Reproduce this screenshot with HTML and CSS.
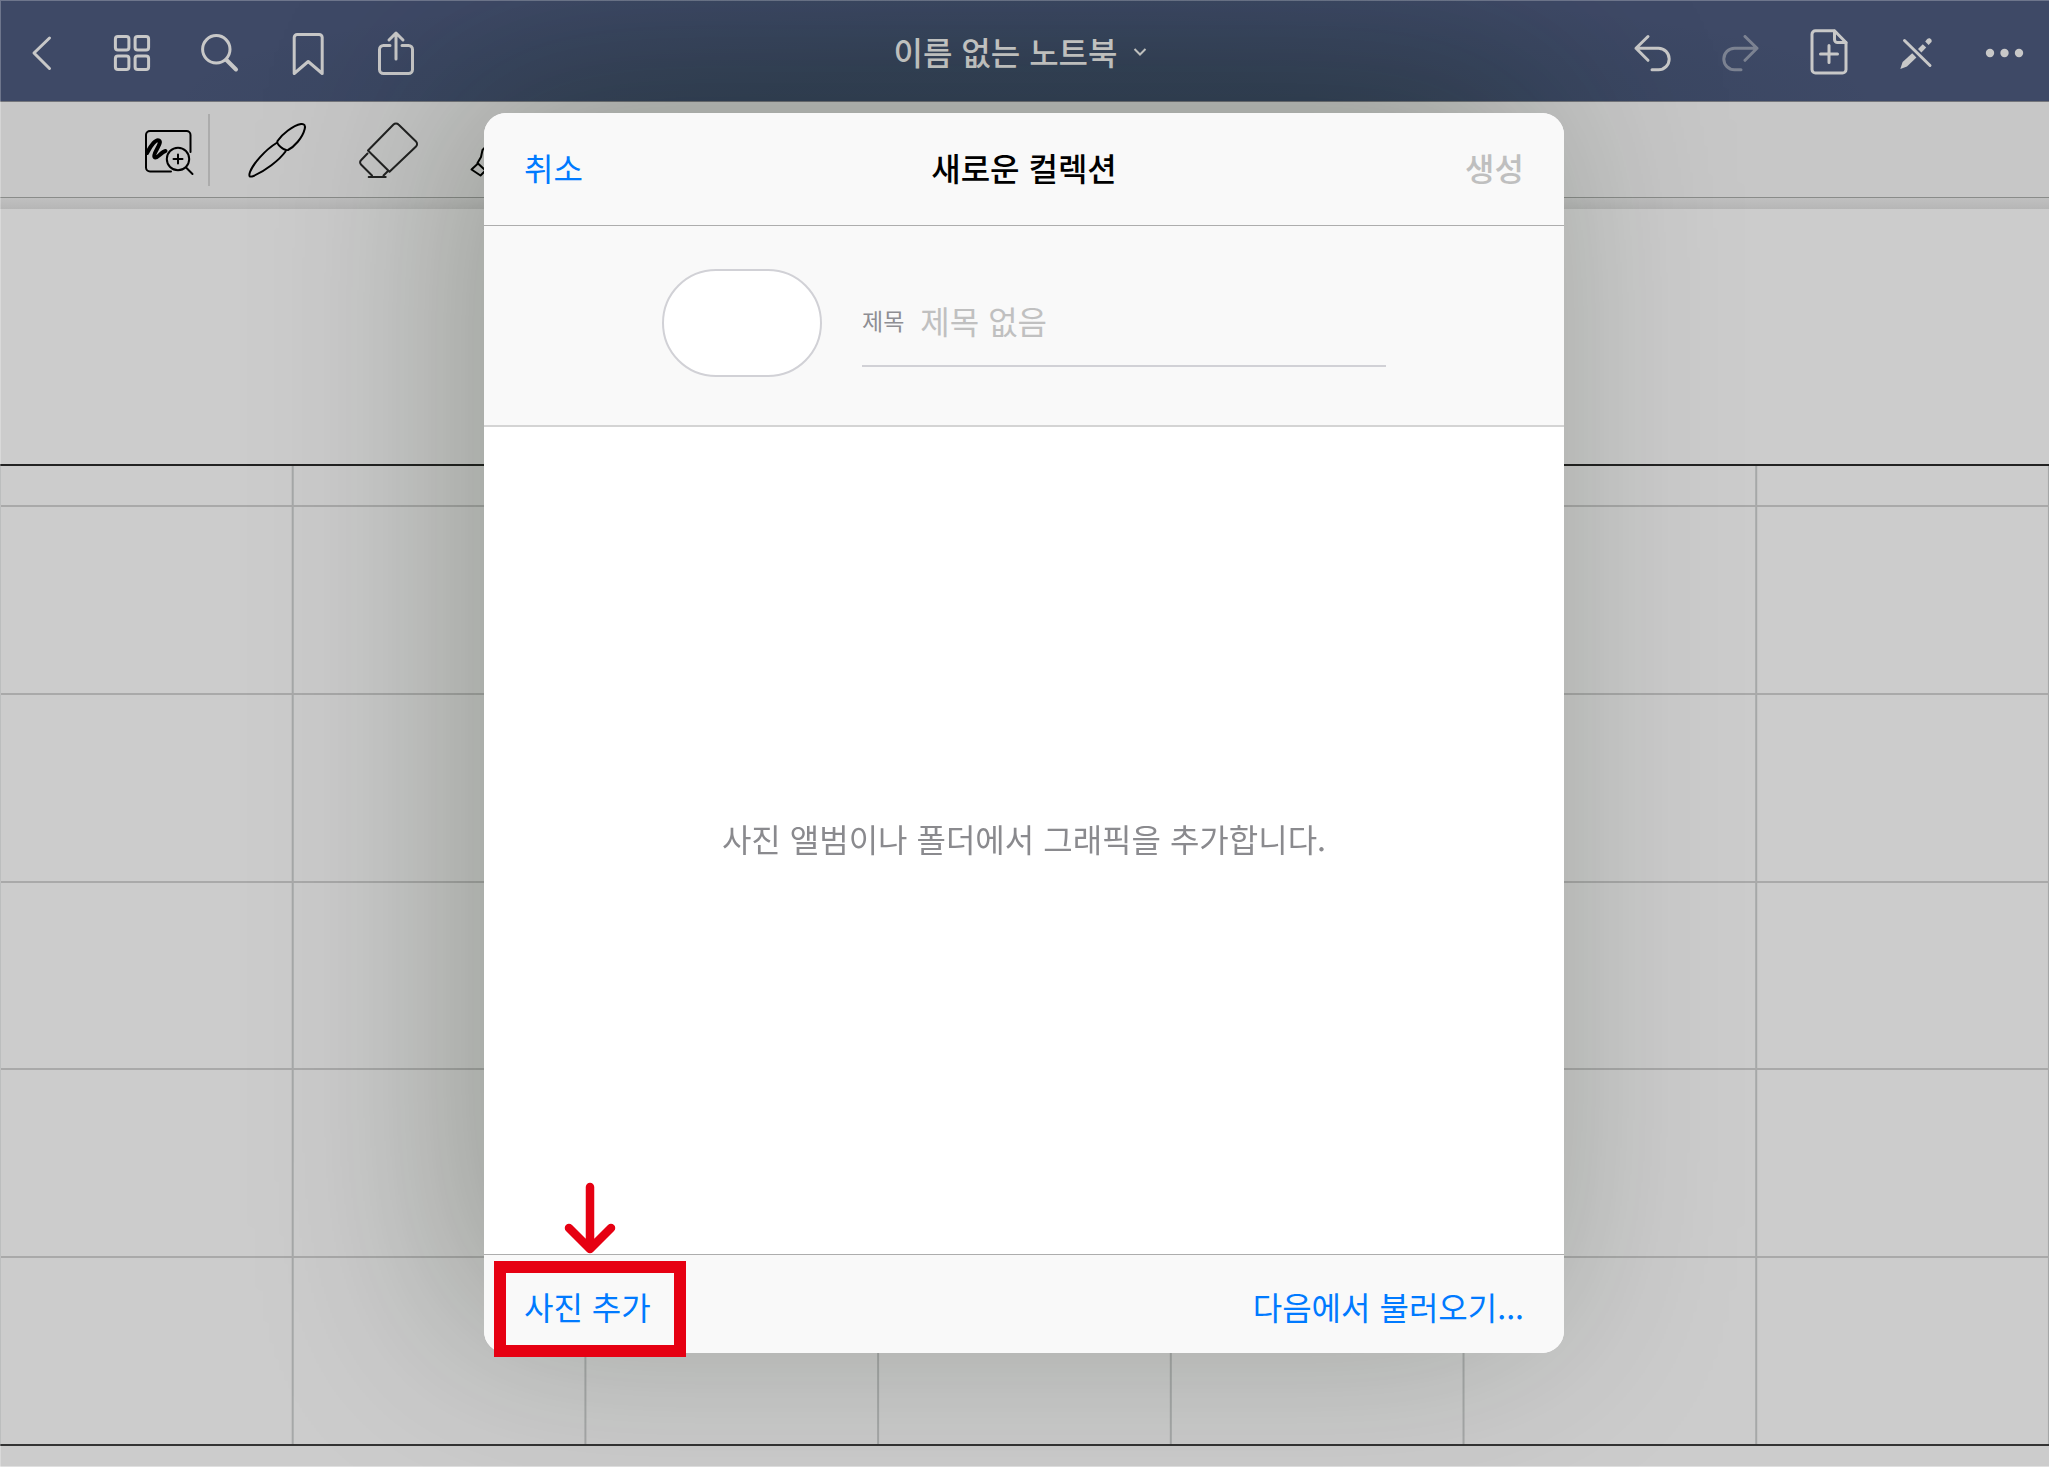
FILE: index.html
```html
<!DOCTYPE html>
<html lang="ko">
<head>
    <meta charset="UTF-8">
    <meta name="viewport" content="width=device-width, initial-scale=1.0">
    <title>이름 없는 노트북</title>
    <link rel="stylesheet" href="styles.css">
</head>
<body>
    <div class="app">
        <header class="navbar">
            <div class="nav-group">
                <button class="nav-btn" type="button" aria-label="뒤로">
                    <svg class="icon" viewBox="0 0 48 48"><path d="M29.500 9L14 24l15.500 15.500"/></svg>
                </button>
                <button class="nav-btn" type="button" aria-label="페이지 목록">
                    <svg class="icon" viewBox="0 0 48 48">
                        <rect x="7.400" y="7.400" width="13.500" height="13.500" rx="2.500"/>
                        <rect x="27.100" y="7.400" width="13.500" height="13.500" rx="2.500"/>
                        <rect x="7.400" y="27.100" width="13.500" height="13.500" rx="2.500"/>
                        <rect x="27.100" y="27.100" width="13.500" height="13.500" rx="2.500"/>
                    </svg>
                </button>
                <button class="nav-btn" type="button" aria-label="검색">
                    <svg class="icon" viewBox="0 0 48 48">
                        <circle cx="20.300" cy="20.300" r="13.700"/>
                        <path class="thick" d="M30.500 31l9.500 9.500"/>
                    </svg>
                </button>
                <button class="nav-btn" type="button" aria-label="북마크">
                    <svg class="icon" viewBox="0 0 48 48"><path d="M10.200 44.500V8.500a3 3 0 0 1 3-3h22a3 3 0 0 1 3 3v36L24.200 32.500z"/></svg>
                </button>
                <button class="nav-btn" type="button" aria-label="공유">
                    <svg class="icon" viewBox="0 0 48 48">
                        <path d="M18 16.500h-6.500a4 4 0 0 0-4 4v20a4 4 0 0 0 4 4h25a4 4 0 0 0 4-4v-20a4 4 0 0 0-4-4H30"/>
                        <path d="M24 30V4M17 11l7-7 7 7"/>
                    </svg>
                </button>
            </div>
            <button class="doc-title" type="button">
                이름 없는 노트북
                <svg class="chevron" viewBox="0 0 16 16"><path d="M2.500 6L8 11.500 13.500 6"/></svg>
            </button>
            <div class="nav-group nav-right">
                <button class="nav-btn" type="button" aria-label="실행 취소">
                    <svg class="icon" viewBox="0 0 48 48"><path d="M19 7.500L7 19.300l12 12M7 19.300h22.500a10.700 10.700 0 0 1 0 21.400H23"/></svg>
                </button>
                <button class="nav-btn" type="button" aria-label="다시 실행" disabled>
                    <svg class="icon" viewBox="0 0 48 48"><path d="M28 7.500l12 11.800-12 12M40 19.300H17.500a10.700 10.700 0 0 0 0 21.400H24"/></svg>
                </button>
                <button class="nav-btn" type="button" aria-label="페이지 추가">
                    <svg class="icon" viewBox="0 0 48 48">
                        <path d="M29.500 1.800H10.500a3.500 3.500 0 0 0-3.500 3.500v35.200a3.500 3.500 0 0 0 3.500 3.500h27a3.500 3.500 0 0 0 3.500-3.500V13.500z"/>
                        <path d="M29.500 2v8.500a3 3 0 0 0 3 3H41M24 16.500v17M15.500 25h17"/>
                    </svg>
                </button>
                <button class="nav-btn" type="button" aria-label="읽기 모드">
                    <svg class="icon" viewBox="0 0 48 48">
                        <path d="M11.500 11.500L37 36.500"/>
                        <path class="solid" d="M7.300 40l2.300-7L19.200 24.200l4.200 4.200L14 37.500z"/>
                        <path class="solid" d="M25 20l4.800-4.800 3.400 3.400-4.800 4.800z"/>
                        <path class="solid" d="M32.200 12.500l2-2.500c2.500-2.500 6 1 3.800 3.500l-2.400 2.400z"/>
                    </svg>
                </button>
                <button class="nav-btn" type="button" aria-label="더 보기">
                    <svg class="icon" viewBox="0 0 48 48">
                        <circle class="solid" cx="9" cy="24" r="4.200"/>
                        <circle class="solid" cx="23.500" cy="24" r="4.200"/>
                        <circle class="solid" cx="38" cy="24" r="4.200"/>
                    </svg>
                </button>
            </div>
        </header>

        <div class="toolbar">
            <button class="tool-btn zoom-btn" type="button" aria-label="확대 창">
                <svg class="tool-icon" viewBox="0 0 64 64">
                    <path d="M54.500 34V17a4 4 0 0 0-4-4H14a4 4 0 0 0-4 4v32.500a4 4 0 0 0 4 4h21"/>
                    <path class="scribble" d="M11 35C15 27 20 21 23 22.500 27 24.500 16 36 18.500 39 21 41.500 25 34 29.500 33"/>
                    <circle cx="42" cy="41" r="11.200"/>
                    <path d="M50 49.500l6.500 6.500M42 36.500v9M37.500 41h9"/>
                </svg>
            </button>
            <div class="divider"></div>
            <button class="tool-btn" type="button" aria-label="펜">
                <svg class="tool-icon" viewBox="0 0 64 64">
                    <path d="M32.500 23C37 16 48 7.500 56 6c3.500-.5 4.500 1.500 3.700 5C57.500 20 49 29 43 32c-4 1-12-6-10.500-9z"/>
                    <path d="M31.500 25C20 32 8 46 5 54c-1.500 4.500-.5 5.500 3.500 4C20 53 34 42.500 40.500 33.500"/>
                </svg>
            </button>
            <button class="tool-btn" type="button" aria-label="지우개">
                <svg class="tool-icon thin" viewBox="0 0 64 64">
                    <path d="M12 32.500L37.500 6.500a3.500 3.500 0 0 1 5 0L60 23.500a3.500 3.500 0 0 1 0 5L33.500 53.700z"/>
                    <path d="M11.500 35.500L5 42.200a3 3 0 0 0 0 4.300L16 57.500M12.700 59h17M27.500 57.500l4-4"/>
                </svg>
            </button>
            <button class="tool-btn" type="button" aria-label="형광펜">
                <svg class="tool-icon" viewBox="0 0 64 64">
                    <path d="M10.500 45l3.500-6 1.500-7 8-8L52 6l8 8-21 29-8 6-7 .5-5.500 3z"/>
                    <path d="M11 45.500L4.500 51.500l9 6 5-5"/>
                </svg>
            </button>
        </div>

        <main class="canvas">
            <div class="planner">
                <div class="week-head"></div>
                <div class="week"></div>
                <div class="week"></div>
                <div class="week"></div>
                <div class="week"></div>
                <div class="week"></div>
            </div>
        </main>
    </div>

    <div class="overlay">
        <form class="dialog" role="dialog" aria-labelledby="dialog-title">
            <div class="dialog-head">
                <button class="link-btn" type="button">취소</button>
                <h1 class="dialog-title" id="dialog-title">새로운 컬렉션</h1>
                <button class="link-btn" type="submit" disabled>생성</button>
            </div>
            <div class="dialog-info">
                <div class="thumb"></div>
                <div class="field">
                    <label for="name">제목</label>
                    <input type="text" id="name" placeholder="제목 없음">
                </div>
            </div>
            <div class="dialog-body">
                <p>사진 앨범이나 폴더에서 그래픽을 추가합니다.</p>
            </div>
            <div class="dialog-foot">
                <button class="link-btn" type="button">사진 추가</button>
                <button class="link-btn" type="button">다음에서 불러오기...</button>
                <div class="marker">
                    <svg class="marker-arrow" viewBox="0 0 56 76"><path d="M28 6v61M7 47l21 21 21-21"/></svg>
                </div>
            </div>
        </form>
    </div>
</body>
</html>
```
FILE: styles.css
```css
* {
    box-sizing: border-box;
}
body {
    margin: 0;
    font-family: "Noto Sans CJK KR", sans-serif;
    font-size: 32px;
    background-color: #ccc;
}
button {
    padding: 0;
    border: none;
    background: none;
    font: inherit;
    line-height: 48px;
}
.app {
    display: flex;
    flex-direction: column;
    min-height: 100vh;
}

/* top bar */
.navbar {
    display: flex;
    align-items: center;
    height: 102px;
    padding-top: 4px;
    background: radial-gradient(ellipse 42% 120% at 50% 100%, rgba(20, 45, 50, 0.2) 30%, transparent) #3e4966;
    border-bottom: 1px solid #74767c;
    color: #c8c8c8;
}
.nav-group {
    display: flex;
    flex: 1;
}
.nav-right {
    justify-content: flex-end;
}
.nav-btn {
    display: flex;
    justify-content: center;
    width: 88px;
    color: inherit;
}
.nav-btn:disabled {
    opacity: 0.45;
}
.icon {
    width: 48px;
    height: 48px;
    fill: none;
    stroke: currentColor;
    stroke-width: 3;
    stroke-linecap: round;
    stroke-linejoin: round;
}
.icon .thick {
    stroke-width: 4;
}
.icon .solid {
    fill: currentColor;
    stroke: none;
}
.doc-title {
    display: flex;
    align-items: center;
    gap: 14px;
    padding: 0 8px 4px 0;
    color: #d2d2d2;
    font-weight: 500;
}
.chevron {
    width: 16px;
    height: 16px;
    fill: none;
    stroke: currentColor;
    stroke-width: 2;
}

/* tools */
.toolbar {
    display: flex;
    align-items: center;
    height: 96px;
    padding-left: 136px;
    background-color: #c7c7c7;
    border-bottom: 1px solid #8a8c8a;
}
.tool-btn {
    display: flex;
    justify-content: center;
    width: 111px;
    color: #000;
}
.zoom-btn {
    width: 64px;
}
.divider {
    width: 2px;
    height: 72px;
    margin: 0 11px 0 8px;
    background-color: #acacac;
}
.tool-icon {
    width: 64px;
    height: 64px;
    fill: none;
    stroke: currentColor;
    stroke-width: 2;
    stroke-linecap: round;
    stroke-linejoin: round;
}
.tool-icon.thin {
    stroke: #222;
}
.tool-icon .scribble {
    stroke-width: 4;
}

/* page */
.canvas {
    display: flex;
    flex: 1;
    padding: 266px 0 21px;
    background: linear-gradient(#c0c0c0, #b6b6b6) top / 100% 11px no-repeat #ccc;
}
.planner {
    display: flex;
    flex: 1;
    flex-direction: column;
    border-top: 2px solid #222;
    border-bottom: 2px solid #333;
    background: linear-gradient(to left, #a6a8a8 2px, transparent 2px) 1px 0 / calc(100% / 7) 100%;
}
.week-head,
.week {
    border-bottom: 2px solid #a9a9a9;
}
.week-head {
    height: 41px;
}
.week {
    flex: 1;
}
.week:last-child {
    border-bottom: none;
}

/* dialog */
.overlay {
    position: fixed;
    inset: 0;
    display: flex;
    justify-content: center;
    padding: 113px 25px 114px 24px;
    box-shadow: inset 1px 1px 0 rgba(255, 255, 255, 0.25), inset 0 -1px 0 rgba(255, 255, 255, 0.4);
    overflow: hidden;
}
.dialog {
    display: flex;
    flex-direction: column;
    width: 1080px;
    border-radius: 22px;
    background-color: #fff;
    box-shadow: -28px -28px 200px rgba(10, 26, 4, 0.27);
}
.dialog-head,
.dialog-foot {
    display: flex;
    align-items: center;
    justify-content: space-between;
    padding: 0 40px 4px;
    background-color: #f9f9f9;
}
.dialog-head {
    height: 113px;
    border-bottom: 1px solid #adadad;
    border-radius: 22px 22px 0 0;
}
.dialog-title {
    margin: 0;
    font-size: 32px;
    font-weight: 500;
}
.link-btn {
    color: #007aff;
}
.link-btn:disabled {
    color: #bfbfbf;
    font-weight: 500;
}
.dialog-info {
    display: flex;
    align-items: center;
    gap: 40px;
    padding: 43px 178px 48px;
    background-color: #f9f9f9;
    border-bottom: 2px solid #d4d4d4;
}
.thumb {
    width: 160px;
    height: 108px;
    border: 2px solid #d1d1d6;
    border-radius: 54px;
    background-color: #fff;
}
.field {
    display: flex;
    flex: 1;
    align-items: center;
    gap: 16px;
    height: 88px;
    padding-bottom: 4px;
    border-bottom: 2px solid #d1d1d6;
}
.field label {
    color: #8e8e93;
    font-size: 23px;
}
.field input {
    flex: 1;
    min-width: 0;
    padding: 0;
    border: none;
    outline: none;
    background: none;
    font: inherit;
}
.field input::placeholder {
    color: #c0c0c0;
}
.dialog-body {
    display: flex;
    flex: 1;
    align-items: center;
    justify-content: center;
    padding-bottom: 6px;
    color: #8a8a8e;
}
.dialog-body p {
    margin: 0;
}
.dialog-foot {
    position: relative;
    height: 99px;
    padding-top: 8px;
    border-top: 1px solid #adadad;
    border-radius: 0 0 22px 22px;
}

/* red callout around the add button */
.marker {
    position: absolute;
    top: 6px;
    left: 10px;
    width: 192px;
    height: 96px;
    border: 12px solid #e60012;
    pointer-events: none;
}
.marker-arrow {
    position: absolute;
    bottom: 88px;
    left: 56px;
    width: 56px;
    height: 76px;
    fill: none;
    stroke: #e60012;
    stroke-width: 8.5;
    stroke-linecap: round;
    stroke-linejoin: round;
}
```
